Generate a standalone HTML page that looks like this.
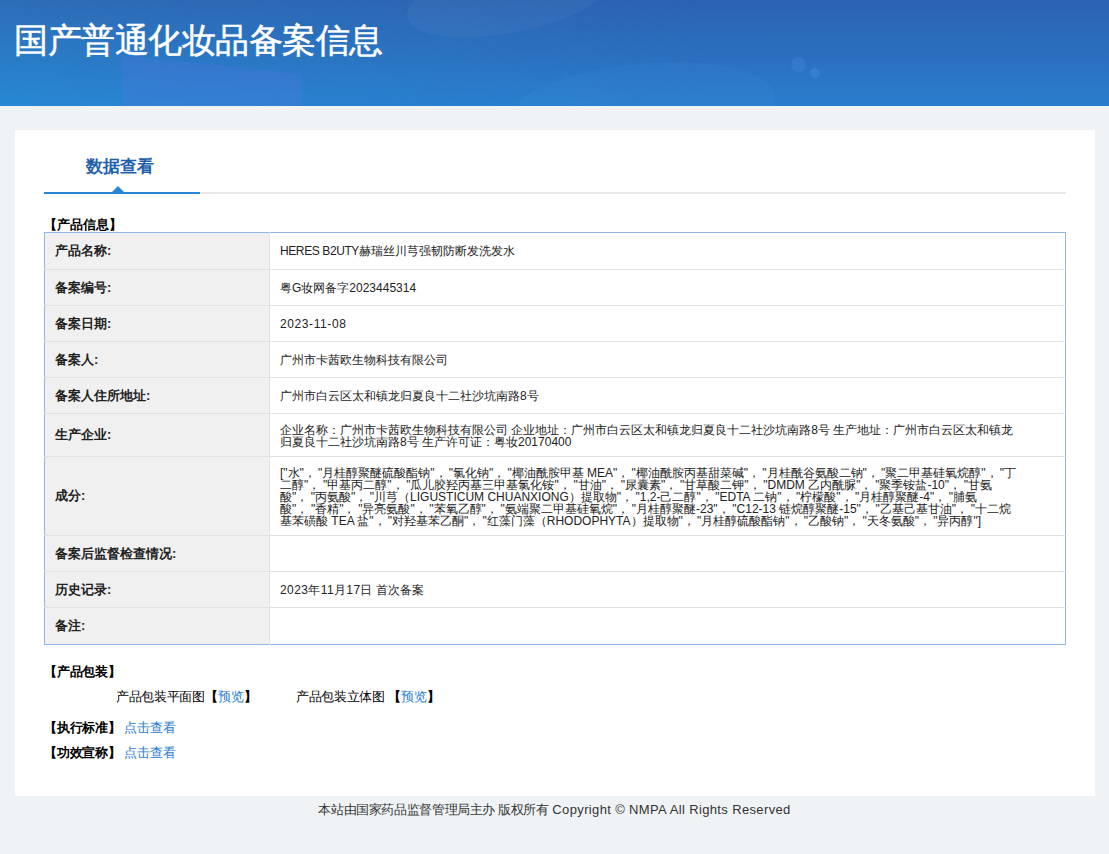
<!DOCTYPE html>
<html><head><meta charset="utf-8">
<style>
*{margin:0;padding:0;box-sizing:border-box}
html,body{width:1109px;height:854px;overflow:hidden}
body{background:#eff3f6;font-family:"Liberation Sans",sans-serif;color:#333;position:relative}
.hdr{position:absolute;left:0;top:0;width:1109px;height:106px;overflow:hidden;
 background:linear-gradient(180deg,#2c62b1 0%,#2b6fbf 50%,#2a7dcc 100%)}
.hdr .lo{position:absolute;left:0;top:0;width:700px;height:106px;background:linear-gradient(180deg,#2e6db6 0%,#2a7bc6 50%,#2888d2 100%);-webkit-mask-image:linear-gradient(to right,#000 0,rgba(0,0,0,.6) 200px,transparent 700px);mask-image:linear-gradient(to right,#000 0,rgba(0,0,0,.6) 200px,transparent 700px)}
.hdr .t{position:absolute;left:14px;top:20px;font-size:34px;-webkit-text-stroke:0.5px #fff;letter-spacing:-0.5px;line-height:40px;color:#fff;white-space:nowrap}
.card{position:absolute;left:15px;top:130px;width:1080px;height:666px;background:#fff}
.tab{position:absolute;left:71px;top:25px;font-size:17px;line-height:24px;font-weight:bold;color:#1f60ab}
.tline{position:absolute;left:29px;top:62px;width:1022px;height:2px;background:#e8e8e8}
.tblue{position:absolute;left:29px;top:62px;width:156px;height:2px;background:#2b87d6}
.tri{position:absolute;left:96.5px;top:56px;width:0;height:0;border-left:6px solid transparent;border-right:6px solid transparent;border-bottom:6px solid #2b87d6}
.sec{position:absolute;font-size:13px;font-weight:bold;color:#000;line-height:16px;white-space:nowrap}
table{position:absolute;left:29px;top:102px;width:1022px;border-collapse:collapse;border:1px solid #92b5e8}
tr:first-child td{border-top:none}
td{border-top:1px solid #e2e2e2;font-size:12px;line-height:12px;color:#222;vertical-align:middle}
td.l{width:225px;background:#f0f0f0;font-size:13px;font-weight:bold;padding-left:10px;border-right:1px solid #e2e2e2}
td.v{padding-left:10px;padding-right:40px}
.ing{white-space:nowrap;padding-top:2px}
.il{display:inline-block;height:12px}
.il i{font-style:normal;margin-right:var(--c)}
.foot{position:absolute;left:0;top:801px;width:1109px;text-align:center;font-size:13px;line-height:18px;color:#333}
.lk{color:#2a7dd2}
</style></head><body>
<div class="hdr">
 <div class="lo"></div>
 <div style="position:absolute;left:122px;top:55px;width:179px;height:60px;background:rgba(90,120,230,0.22);transform:skewY(6deg);transform-origin:0 0"></div>
 <div style="position:absolute;left:405px;top:-42px;width:215px;height:74px;border-radius:50%;background:rgba(255,255,255,0.035);transform:rotate(-12deg)"></div>
 <div style="position:absolute;left:505px;top:64px;width:270px;height:90px;border-radius:50%;background:rgba(80,170,240,0.07);transform:rotate(-6deg)"></div>
 <div style="position:absolute;left:791px;top:57px;width:15px;height:15px;border-radius:50%;background:rgba(110,170,250,0.15)"></div>
 <div style="position:absolute;left:810px;top:68px;width:10px;height:10px;border-radius:50%;background:rgba(110,170,250,0.2)"></div>
 <div class="t">国产普通化妆品备案信息</div></div>
<div class="card">
 <div class="tab">数据查看</div>
 <div class="tline"></div><div class="tblue"></div><div class="tri"></div>
 <div class="sec" style="left:29px;top:87px">【产品信息】</div>
 <table>
  <tr style="height:37px"><td class="l">产品名称:</td><td class="v"><span style="letter-spacing:-0.4px">HERES B2UTY</span>赫瑞丝川芎强韧防断发洗发水</td></tr>
  <tr style="height:36px"><td class="l">备案编号:</td><td class="v">粤G妆网备字2023445314</td></tr>
  <tr style="height:36px"><td class="l">备案日期:</td><td class="v" style="letter-spacing:0.6px">2023-11-08</td></tr>
  <tr style="height:36px"><td class="l">备案人:</td><td class="v">广州市卡茜欧生物科技有限公司</td></tr>
  <tr style="height:36px"><td class="l">备案人住所地址:</td><td class="v">广州市白云区太和镇龙归夏良十二社沙坑南路8号</td></tr>
  <tr style="height:43px"><td class="l">生产企业:</td><td class="v" style="padding-top:1px">企业名称：广州市卡茜欧生物科技有限公司 企业地址：广州市白云区太和镇龙归夏良十二社沙坑南路8号 生产地址：广州市白云区太和镇龙归夏良十二社沙坑南路8号 生产许可证：粤妆20170400</td></tr>
  <tr style="height:79px"><td class="l">成分:</td><td class="v ing"><span class="il" id="il0" style="--c:2.20px">["水"<i>，</i>"月桂醇聚醚硫酸酯钠"<i>，</i>"氯化钠"<i>，</i>"椰油酰胺甲基 MEA"<i>，</i>"椰油酰胺丙基甜菜碱"<i>，</i>"月桂酰谷氨酸二钠"<i>，</i>"聚二甲基硅氧烷醇"<i>，</i>"丁</span><br><span class="il" id="il1" style="--c:2.73px">二醇"<i>，</i>"甲基丙二醇"<i>，</i>"瓜儿胶羟丙基三甲基氯化铵"<i>，</i>"甘油"<i>，</i>"尿囊素"<i>，</i>"甘草酸二钾"<i>，</i>"DMDM 乙内酰脲"<i>，</i>"聚季铵盐-10"<i>，</i>"甘氨</span><br><span class="il" id="il2" style="--c:2.51px">酸"<i>，</i>"丙氨酸"<i>，</i>"川芎（LIGUSTICUM CHUANXIONG）提取物"<i>，</i>"1,2-己二醇"<i>，</i>"EDTA 二钠"<i>，</i>"柠檬酸"<i>，</i>"月桂醇聚醚-4"<i>，</i>"脯氨</span><br><span class="il" id="il3" style="--c:2.68px">酸"<i>，</i>"香精"<i>，</i>"异亮氨酸"<i>，</i>"苯氧乙醇"<i>，</i>"氨端聚二甲基硅氧烷"<i>，</i>"月桂醇聚醚-23"<i>，</i>"C12-13 链烷醇聚醚-15"<i>，</i>"乙基己基甘油"<i>，</i>"十二烷</span><br><span class="il" id="il4" style="--c:2.19px">基苯磺酸 TEA 盐"<i>，</i>"对羟基苯乙酮"<i>，</i>"红藻门藻（RHODOPHYTA）提取物"<i>，</i>"月桂醇硫酸酯钠"<i>，</i>"乙酸钠"<i>，</i>"天冬氨酸"<i>，</i>"异丙醇"]</span></td></tr>
  <tr style="height:36px"><td class="l">备案后监督检查情况:</td><td class="v"></td></tr>
  <tr style="height:36px"><td class="l">历史记录:</td><td class="v"><span style="letter-spacing:0.4px">2023年11月17日</span> 首次备案</td></tr>
  <tr style="height:37px"><td class="l">备注:</td><td class="v"></td></tr>
 </table>
 <div class="sec" style="left:29px;top:534px;letter-spacing:-0.25px">【产品包装】</div>
 <div class="sec" style="left:101px;top:559px;font-weight:normal"><span style="letter-spacing:-0.35px">产品包装平面图</span><b>【</b><span class="lk">预览</span><b>】</b></div>
 <div class="sec" style="left:281px;top:559px;font-weight:normal"><span style="letter-spacing:-0.35px">产品包装立体图</span> <b>【</b><span class="lk">预览</span><b>】</b></div>
 <div class="sec" style="left:29px;top:590px"><span style="letter-spacing:-0.25px">【执行标准】</span> <span class="lk" style="font-weight:normal">点击查看</span></div>
 <div class="sec" style="left:29px;top:615px"><span style="letter-spacing:-0.25px">【功效宣称】</span> <span class="lk" style="font-weight:normal">点击查看</span></div>
</div>
<div class="foot"><span id="f1" style="letter-spacing:-0.38px">本站由国家药品监督管理局主办 版权所有</span> <span id="f2" style="letter-spacing:0.36px">Copyright © NMPA All Rights Reserved</span></div>
</body></html>
